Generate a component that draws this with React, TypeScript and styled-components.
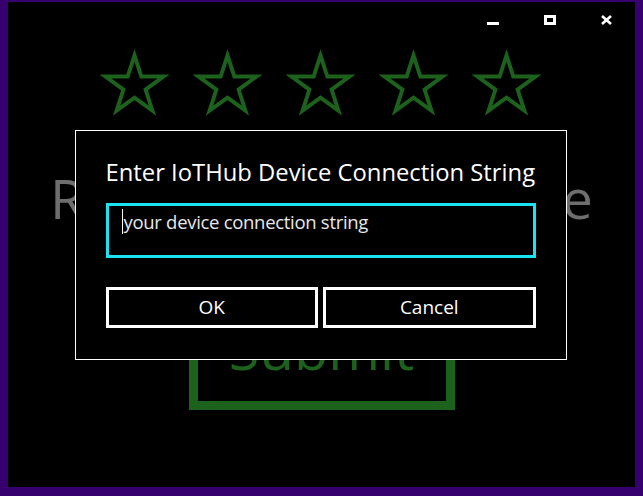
import React from 'react';
import styled, { createGlobalStyle } from 'styled-components';

const Global = createGlobalStyle`
  html, body { margin: 0; padding: 0; background: #000; }
  body { font-family: "Open Sans", "Noto Sans", sans-serif; }
  #root { width: 643px; height: 496px; }
`;

const Frame = styled.div`
  box-sizing: border-box;
  position: relative;
  width: 643px;
  height: 496px;
  background: #000;
  border-style: solid;
  border-color: #37006f;
  border-width: 2px 8px 9px 8px;
  display: flex;
  flex-direction: column;
  align-items: center;
`;

const TitleBar = styled.div`
  align-self: stretch;
  display: flex;
  justify-content: flex-end;
  height: 36px;
`;

const CaptionButton = styled.div`
  width: 57px;
  height: 36px;
  display: flex;
  align-items: center;
  justify-content: center;
  color: #fff;
`;

const StarsRow = styled.div`
  display: flex;
  gap: 30px;
  margin-top: 14px;
  padding-right: 3px;
`;

const Heading = styled.div`
  margin-top: 50px;
  font-size: 55px;
  line-height: 64px;
  color: #6e6e6e;
  white-space: nowrap;
`;

const SubmitBox = styled.div`
  box-sizing: border-box;
  margin-top: 80px;
  width: 266px;
  height: 100px;
  border: 9px solid #1c611c;
  display: flex;
  align-items: flex-start;
  justify-content: center;
  color: #1c611c;
  font-size: 56px;
  line-height: 58px;
`;

const Overlay = styled.div`
  position: absolute;
  inset: 0;
  padding-right: 2px;
  display: flex;
  align-items: center;
  justify-content: center;
`;

const Dialog = styled.div`
  box-sizing: border-box;
  width: 492px;
  height: 230px;
  background: #000;
  border: 1px solid #fff;
  padding: 24px 30px 0 30px;
  display: flex;
  flex-direction: column;
`;

const DialogTitle = styled.div`
  color: #fff;
  font-size: 23.8px;
  line-height: 34px;
  white-space: nowrap;
`;

const TextBox = styled.div`
  box-sizing: border-box;
  margin-top: 14px;
  height: 55px;
  border: 3px solid #1ce3f4;
  padding: 2px 13px 0 13px;
  color: #e8e8e8;
  font-size: 18.5px;
  letter-spacing: -0.3px;
  line-height: 28px;
  display: flex;
  align-items: flex-start;
  white-space: nowrap;
`;

const Caret = styled.span`
  display: inline-block;
  width: 1px;
  height: 25px;
  margin-top: 1px;
  margin-right: 1px;
  background: #fff;
`;

const ButtonRow = styled.div`
  display: grid;
  grid-template-columns: 1fr 1fr;
  gap: 5px;
  margin-top: 29px;
`;

const DialogButton = styled.div`
  box-sizing: border-box;
  height: 41px;
  border: 3px solid #fff;
  color: #fff;
  font-size: 19px;
  display: flex;
  align-items: center;
  justify-content: center;
`;

const Star = () => (
  <svg width="63" height="64" viewBox="0 0 64 64" style={{ overflow: 'visible' }}>
    <polygon
      points="32,3 38.96,24.42 61.5,24.4 43.26,37.66 50.2,59.1 32,45.84 13.8,59.1 20.74,37.66 2.5,24.4 25.04,24.42"
      fill="none"
      stroke="#1c611c"
      strokeWidth="4"
      strokeLinejoin="miter"
    />
  </svg>
);

export default function App() {
  return (
    <>
      <Global />
      <Frame>
        <TitleBar>
          <CaptionButton>
            <svg width="12" height="12" viewBox="0 0 12 12">
              <rect x="0" y="8" width="12" height="3" fill="#fff" />
            </svg>
          </CaptionButton>
          <CaptionButton>
            <svg width="12" height="10" viewBox="0 0 12 10">
              <rect x="1.5" y="1.5" width="9" height="7" fill="none" stroke="#fff" strokeWidth="3" />
            </svg>
          </CaptionButton>
          <CaptionButton>
            <svg width="11" height="10" viewBox="0 0 11 10">
              <path d="M1 1 L10 9 M10 1 L1 9" stroke="#fff" strokeWidth="2.6" />
            </svg>
          </CaptionButton>
        </TitleBar>
        <StarsRow>
          {[0, 1, 2, 3, 4].map((i) => (
            <Star key={i} />
          ))}
        </StarsRow>
        <Heading>Rate your experience</Heading>
        <SubmitBox>Submit</SubmitBox>
        <Overlay>
          <Dialog>
            <DialogTitle>Enter IoTHub Device Connection String</DialogTitle>
            <TextBox>
              <Caret />
              your device connection string
            </TextBox>
            <ButtonRow>
              <DialogButton>OK</DialogButton>
              <DialogButton>Cancel</DialogButton>
            </ButtonRow>
          </Dialog>
        </Overlay>
      </Frame>
    </>
  );
}
